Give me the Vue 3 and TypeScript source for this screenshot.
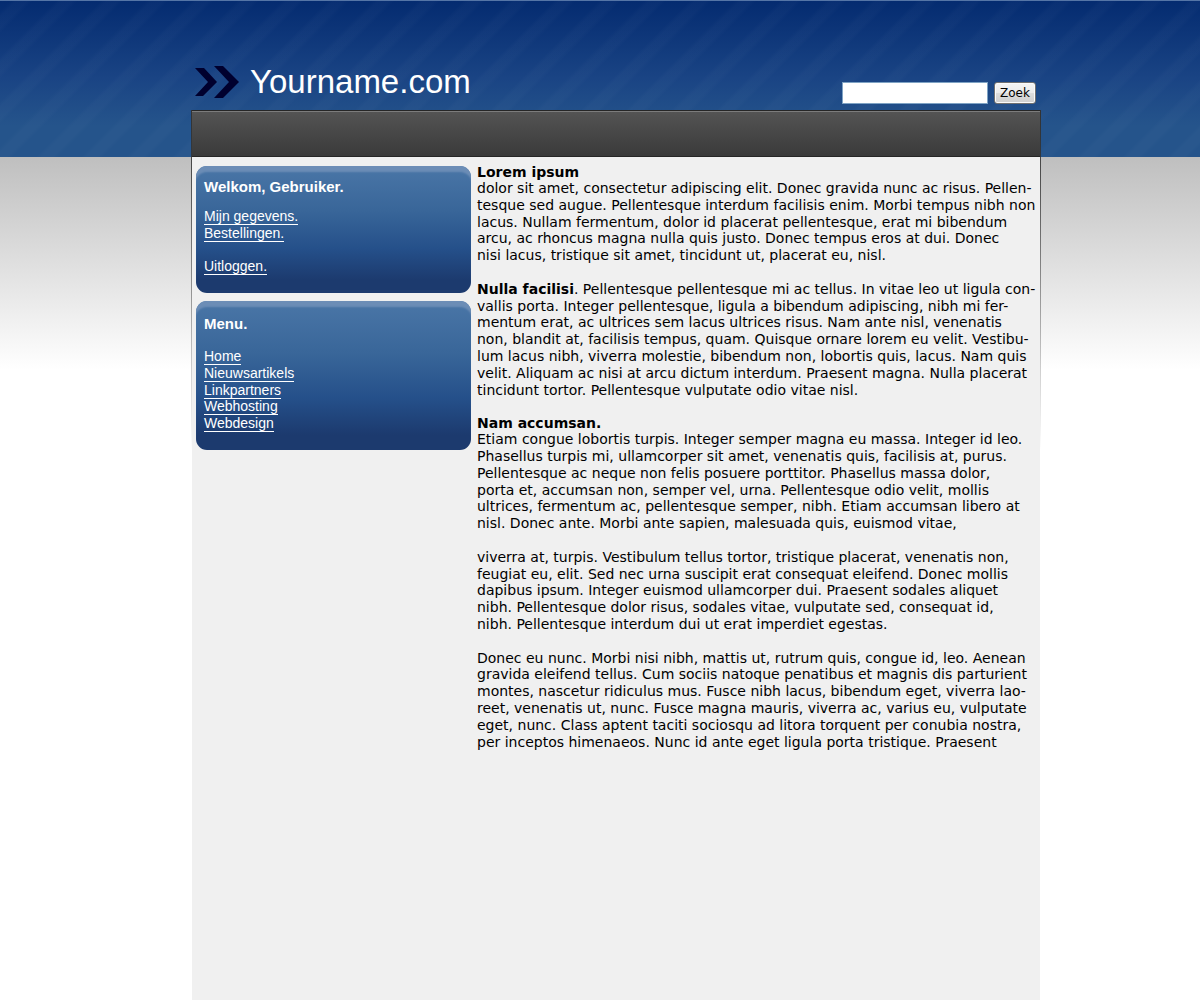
<script setup lang="ts">
import { ref } from 'vue'

interface Block {
  title?: string
  lead?: string
  lines: string[]
}

const query = ref('')

const accountLinks = ['Mijn gegevens.', 'Bestellingen.']
const menuLinks = ['Home', 'Nieuwsartikels', 'Linkpartners', 'Webhosting', 'Webdesign']

const blocks: Block[] = [
  {
    title: 'Lorem ipsum',
    lines: [
      'dolor sit amet, consectetur adipiscing elit. Donec gravida nunc ac risus. Pellen-',
      'tesque sed augue. Pellentesque interdum facilisis enim. Morbi tempus nibh non',
      'lacus. Nullam fermentum, dolor id placerat pellentesque, erat mi bibendum',
      'arcu, ac rhoncus magna nulla quis justo. Donec tempus eros at dui. Donec',
      'nisi lacus, tristique sit amet, tincidunt ut, placerat eu, nisl.',
    ],
  },
  {
    lead: 'Nulla facilisi',
    lines: [
      '. Pellentesque pellentesque mi ac tellus. In vitae leo ut ligula con-',
      'vallis porta. Integer pellentesque, ligula a bibendum adipiscing, nibh mi fer-',
      'mentum erat, ac ultrices sem lacus ultrices risus. Nam ante nisl, venenatis',
      'non, blandit at, facilisis tempus, quam. Quisque ornare lorem eu velit. Vestibu-',
      'lum lacus nibh, viverra molestie, bibendum non, lobortis quis, lacus. Nam quis',
      'velit. Aliquam ac nisi at arcu dictum interdum. Praesent magna. Nulla placerat',
      'tincidunt tortor. Pellentesque vulputate odio vitae nisl.',
    ],
  },
  {
    title: 'Nam accumsan.',
    lines: [
      'Etiam congue lobortis turpis. Integer semper magna eu massa. Integer id leo.',
      'Phasellus turpis mi, ullamcorper sit amet, venenatis quis, facilisis at, purus.',
      'Pellentesque ac neque non felis posuere porttitor. Phasellus massa dolor,',
      'porta et, accumsan non, semper vel, urna. Pellentesque odio velit, mollis',
      'ultrices, fermentum ac, pellentesque semper, nibh. Etiam accumsan libero at',
      'nisl. Donec ante. Morbi ante sapien, malesuada quis, euismod vitae,',
    ],
  },
  {
    lines: [
      'viverra at, turpis. Vestibulum tellus tortor, tristique placerat, venenatis non,',
      'feugiat eu, elit. Sed nec urna suscipit erat consequat eleifend. Donec mollis',
      'dapibus ipsum. Integer euismod ullamcorper dui. Praesent sodales aliquet',
      'nibh. Pellentesque dolor risus, sodales vitae, vulputate sed, consequat id,',
      'nibh. Pellentesque interdum dui ut erat imperdiet egestas.',
    ],
  },
  {
    lines: [
      'Donec eu nunc. Morbi nisi nibh, mattis ut, rutrum quis, congue id, leo. Aenean',
      'gravida eleifend tellus. Cum sociis natoque penatibus et magnis dis parturient',
      'montes, nascetur ridiculus mus. Fusce nibh lacus, bibendum eget, viverra lao-',
      'reet, venenatis ut, nunc. Fusce magna mauris, viverra ac, varius eu, vulputate',
      'eget, nunc. Class aptent taciti sociosqu ad litora torquent per conubia nostra,',
      'per inceptos himenaeos. Nunc id ante eget ligula porta tristique. Praesent',
    ],
  },
]
</script>

<template>
  <div class="page">
    <div class="shell">
      <header class="top">
        <a class="brand" href="#">
          <svg class="mark" width="44" height="32" viewBox="0 0 44 32" aria-hidden="true">
            <path d="M0 2H9L22 16L8 30H0L13 16Z M19 0H28L44 16L28 32H19L34 16Z" fill="#00002e" />
          </svg>
          <span>Yourname.com</span>
        </a>
        <form class="search" @submit.prevent>
          <input v-model="query" type="text" aria-label="Zoekterm" />
          <button type="submit">Zoek</button>
        </form>
      </header>
      <div class="frame">
        <nav class="bar" aria-label="Hoofdmenu"></nav>
        <div class="body">
          <aside class="side">
            <section class="card account">
              <h2>Welkom, Gebruiker.</h2>
              <ul>
                <li v-for="link in accountLinks" :key="link"><a href="#">{{ link }}</a></li>
                <li class="apart"><a href="#">Uitloggen.</a></li>
              </ul>
            </section>
            <section class="card menu">
              <h2>Menu.</h2>
              <ul>
                <li v-for="link in menuLinks" :key="link"><a href="#">{{ link }}</a></li>
              </ul>
            </section>
          </aside>
          <main class="text">
            <article v-for="(block, i) in blocks" :key="i">
              <h1 v-if="block.title">{{ block.title }}</h1>
              <p>
                <template v-for="(line, n) in block.lines" :key="n"><br v-if="n > 0" /><b v-if="n === 0 && block.lead">{{ block.lead }}</b>{{ line }}</template>
              </p>
            </article>
          </main>
        </div>
      </div>
    </div>
  </div>
</template>

<style>
body {
  margin: 0;
  background: #fff;
}
</style>

<style scoped>
.page {
  box-sizing: border-box;
  min-height: 100vh;
  padding-left: 32px;
  display: flex;
  justify-content: center;
  font: 14px/1.2 "Liberation Sans", Arial, sans-serif;
  background:
    linear-gradient(#5575a6, #5575a6) 0 0 / 100% 1px no-repeat,
    repeating-linear-gradient(135deg, rgba(255, 255, 255, 0) 0 8px, rgba(255, 255, 255, 0.018) 12px 20px, rgba(255, 255, 255, 0) 24px 32px) 0 0 / 100% 157px no-repeat,
    linear-gradient(#042b70, #1a4484 50%, #25548b 80%, #25548b) 0 0 / 100% 157px no-repeat,
    linear-gradient(#bfbfbf, #fff) 0 157px / 100% 213px no-repeat,
    #fff;
}

.shell {
  width: 100%;
  max-width: 850px;
  display: flex;
  flex-direction: column;
}

.top {
  box-sizing: border-box;
  height: 110px;
  padding: 0 5px 6px 4px;
  display: flex;
  justify-content: space-between;
  align-items: flex-end;
}

.brand {
  display: flex;
  align-items: center;
  gap: 11px;
  padding-bottom: 5px;
  color: #fff;
  font-size: 33px;
  line-height: 34px;
  text-decoration: none;
}

.search {
  display: flex;
  align-items: center;
  gap: 6px;
}

.search input {
  box-sizing: border-box;
  width: 146px;
  height: 22px;
  padding: 1px 4px;
  border: 1px solid #7fa3c4;
  background: #fff;
}

.search button {
  box-sizing: border-box;
  width: 42px;
  height: 22px;
  padding: 0;
  border: 1px solid #707070;
  border-radius: 3px;
  background: linear-gradient(#f4f4f4, #ebebeb 50%, #dcdcdc 50%, #cfcfcf);
  box-shadow: inset 0 0 0 1px #fafafa;
  color: #000;
  font: 12px/20px "DejaVu Sans", Verdana, sans-serif;
}

.frame {
  flex: 1;
  display: flex;
  flex-direction: column;
  padding: 0 1px;
  background:
    linear-gradient(#333, rgba(51, 51, 51, 0) 340px) 0 0 / 1px 100% no-repeat,
    linear-gradient(#333, rgba(51, 51, 51, 0) 340px) 100% 0 / 1px 100% no-repeat;
}

.bar {
  box-sizing: border-box;
  height: 47px;
  border-top: 1px solid #262626;
  border-bottom: 1px solid #262626;
  box-shadow: inset 0 1px #7c7c7c;
  background:
    linear-gradient(135deg, rgba(0, 0, 0, 0.12) 12%, transparent 12% 50%, rgba(0, 0, 0, 0.12) 50% 62%, transparent 62%) 0 0 / 4px 4px,
    linear-gradient(#545454, #3a3a3a);
}

.body {
  flex: 1;
  display: flex;
  align-items: flex-start;
  gap: 6px;
  padding: 7px 4px 32px;
  background: #f0f0f0;
}

.side {
  flex: 0 0 275px;
  display: flex;
  flex-direction: column;
  gap: 8px;
  padding-top: 2px;
}

.card {
  box-sizing: border-box;
  padding: 12px 8px 16px;
  border-radius: 11px;
  background: linear-gradient(#4a76a7, #396699 35%, #25508a 65%, #1c3a6e 90%);
  box-shadow: inset 0 7px 2px -1px #6c8db6;
  color: #fff;
}

.account {
  min-height: 127px;
}

.menu {
  min-height: 149px;
  padding-top: 14px;
}

.card h2 {
  margin: 0 0 13px;
  font-size: 15px;
  line-height: 17px;
}

.menu h2 {
  margin-bottom: 16px;
}

.card ul {
  margin: 0;
  padding: 0;
  list-style: none;
}

.apart {
  margin-top: 1.2em;
}

.card a {
  border-bottom: 1px solid #fff;
  color: #fff;
  text-decoration: none;
}

.text {
  flex: 1;
  min-width: 0;
  color: #000;
  font-family: "DejaVu Sans", Verdana, sans-serif;
  white-space: nowrap;
}

.text article + article {
  margin-top: 1.2em;
}

.text h1 {
  margin: 0;
  font-size: 14px;
  line-height: 16px;
}

.text p {
  margin: 0;
}
</style>
